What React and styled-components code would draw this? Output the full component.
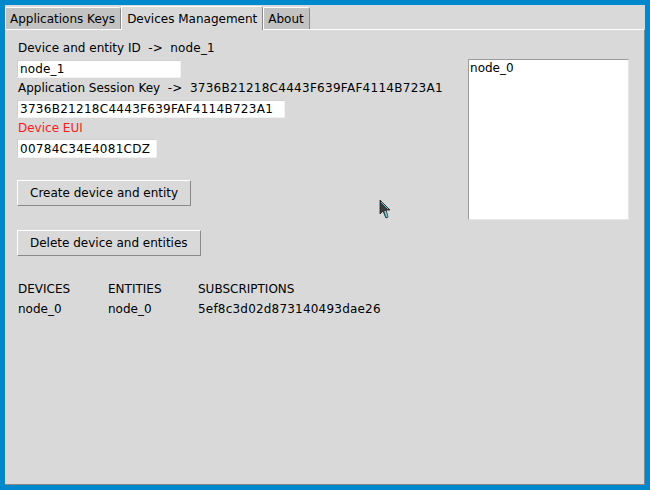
import React from 'react';
import styled, { createGlobalStyle } from 'styled-components';

const Global = createGlobalStyle`
    html, body {
        margin: 0;
        padding: 0;
        background: #0088cc;
    }
    body {
        font-family: "DejaVu Sans", sans-serif;
        font-size: 12px;
        color: #000;
    }
`

const Frame = styled.div`
    width: 650px;
    height: 490px;
    box-sizing: border-box;
    padding: 5px;
    background: #0088cc;
    position: relative;
`

const Window = styled.div`
    height: 100%;
    display: flex;
    flex-direction: column;
    background: #d9d9d9;
`

const TabBar = styled.div`
    display: flex;
    align-items: flex-end;
    height: 24px;
    flex-shrink: 0;
`

const Tab = styled.div`
    box-sizing: border-box;
    height: ${p => (p.active ? '24px' : '22px')};
    padding: ${p => (p.active ? '0 5px' : '0 5px 0 4px')};
    display: flex;
    align-items: center;
    background: ${p => (p.active ? '#d9d9d9' : '#c3c3c3')};
    border-top: 1px solid #fff;
    border-left: 1px solid #fff;
    border-right: 1px solid #888;
    border-top-right-radius: 3px;
    white-space: nowrap;
    margin-bottom: ${p => (p.active ? '-1px' : '0')};
    position: relative;
    z-index: ${p => (p.active ? 1 : 0)};
`

const Pane = styled.div`
    flex: 1;
    display: flex;
    align-items: flex-start;
    padding: 8px 15px 0 12px;
    border-top: 1px solid #fff;
    border-right: 1px solid #888;
    border-bottom: 1px solid #888;
`

const Form = styled.div`
    width: 450px;
    display: flex;
    flex-direction: column;
    align-items: flex-start;
`

const Label = styled.div`
    height: 20px;
    line-height: 20px;
    padding-left: 1px;
    white-space: pre;
    color: ${p => p.color || '#000'};
`

const Code = styled.span`
    letter-spacing: ${p => p.spread || 0.28}px;
`

const Entry = styled.div`
    box-sizing: border-box;
    width: ${p => p.width}px;
    height: ${p => p.tall || 18}px;
    margin-top: ${p => p.gap ?? 2}px;
    padding: 0 2px;
    line-height: ${p => (p.tall || 18) - 1}px;
    background: #fff;
    border-top: 1px solid #cfcfcf;
    border-left: 1px solid #cfcfcf;
    border-right: 1px solid #f2f2f2;
    border-bottom: 1px solid #f2f2f2;
    white-space: nowrap;
`

const Button = styled.button`
    box-sizing: border-box;
    height: 26px;
    margin-top: ${p => p.gap}px;
    padding: 0 12px;
    font-family: "DejaVu Sans", sans-serif;
    font-size: 12px;
    color: #000;
    background: #d9d9d9;
    border-top: 1px solid #fff;
    border-left: 1px solid #fff;
    border-right: 1px solid #8a8a8a;
    border-bottom: 1px solid #8a8a8a;
    border-radius: 0;
`

const Table = styled.div`
    margin-top: 23px;
    display: grid;
    grid-template-columns: 90px 90px auto;
    padding-left: 1px;
`

const Cell = styled.div`
    height: 20px;
    line-height: 20px;
    white-space: nowrap;
`

const ListBox = styled.div`
    box-sizing: border-box;
    margin-left: 4px;
    margin-top: 21px;
    width: 162px;
    height: 161px;
    padding: 1px 1px;
    background: #fff;
    border-top: 1px solid #9a9a9a;
    border-left: 1px solid #9a9a9a;
    border-right: 1px solid #e6e6e6;
    border-bottom: 1px solid #e6e6e6;
    line-height: 15px;
`

const Pointer = styled.svg`
    position: absolute;
    left: 379px;
    top: 199px;
`

const App = () => {
    return (
        <Frame>
            <Global />
            <Window>
                <TabBar>
                    <Tab>Applications Keys</Tab>
                    <Tab active>Devices Management</Tab>
                    <Tab>About</Tab>
                </TabBar>
                <Pane>
                    <Form>
                        <Label>{'Device and entity ID  ->  '}<Code spread={0.15}>node_1</Code></Label>
                        <Entry width={164}><Code spread={0.15}>node_1</Code></Entry>
                        <Label>{'Application Session Key  ->  '}<Code>3736B21218C4443F639FAF4114B723A1</Code></Label>
                        <Entry width={268}><Code>3736B21218C4443F639FAF4114B723A1</Code></Entry>
                        <Label color="#ff1a1a">Device EUI</Label>
                        <Entry width={140} gap={1} tall={19}><Code>00784C34E4081CDZ</Code></Entry>
                        <Button gap={22}>Create device and entity</Button>
                        <Button gap={24}>Delete device and entities</Button>
                        <Table>
                            <Cell>DEVICES</Cell>
                            <Cell>ENTITIES</Cell>
                            <Cell>SUBSCRIPTIONS</Cell>
                            <Cell>node_0</Cell>
                            <Cell>node_0</Cell>
                            <Cell><Code spread={0.2}>5ef8c3d02d873140493dae26</Code></Cell>
                        </Table>
                    </Form>
                    <ListBox>node_0</ListBox>
                </Pane>
            </Window>
            <Pointer width="14" height="20" viewBox="0 0 14 20">
                <path d="M1 1 L1 15 L4 12 L7 19 L9 18 L7 11 L11 11 Z" fill="#3a3a3a" stroke="#222" strokeWidth="0.8" />
                <path d="M6 12 L8 18" stroke="#6fd6df" strokeWidth="1.6" />
                <path d="M2 3 L9 10" stroke="#5cc8d2" strokeWidth="1" />
            </Pointer>
        </Frame>
    );
};

export default App;
